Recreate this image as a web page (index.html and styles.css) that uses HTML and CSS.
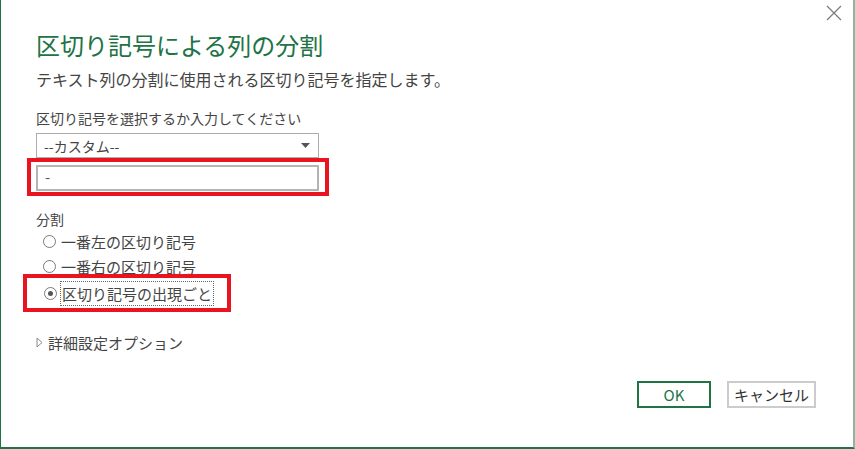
FILE: index.html
```html
<html>
  <head>
    <meta name="viewport" content="width=device-width, initial-scale=1">
    <link rel="stylesheet" href="styles.css">
  </head>
  <body>
    <div class="dialog">
      <div class="titlebar">
        <span class="close">
          <svg width="16" height="16" viewBox="0 0 16 16">
            <path d="M1 1 L15 15 M15 1 L1 15" stroke="#7a7a7a" stroke-width="1.2" fill="none"/>
          </svg>
        </span>
      </div>
      <div class="content">
        <h1 class="title">区切り記号による列の分割</h1>
        <p class="subtitle">テキスト列の分割に使用される区切り記号を指定します。</p>
        <label class="label">区切り記号を選択するか入力してください</label>
        <div class="select">
          <span>--カスタム--</span>
          <svg width="9" height="5" viewBox="0 0 9 5"><path d="M0 0 L9 0 L4.5 5 Z" fill="#555"/></svg>
        </div>
        <div class="mark mark-input">
          <div class="input">-</div>
        </div>
        <label class="label split-label">分割</label>
        <div class="radio"><span class="circle"></span><span>一番左の区切り記号</span></div>
        <div class="radio"><span class="circle"></span><span>一番右の区切り記号</span></div>
        <div class="mark mark-radio">
          <div class="radio checked"><span class="circle"><span class="dot"></span></span><span class="focus">区切り記号の出現ごと</span></div>
        </div>
        <div class="advanced">
          <svg width="7" height="11" viewBox="0 0 7 11"><path d="M1 1 L6 5.5 L1 10 Z" fill="none" stroke="#8a8a8a" stroke-width="1"/></svg>
          <span>詳細設定オプション</span>
        </div>
        <div class="buttons">
          <button class="ok">OK</button>
          <button class="cancel">キャンセル</button>
        </div>
      </div>
    </div>
  </body>
</html>
```
FILE: styles.css
```css
body {
  margin: 0;
  background: white;
  font-family: "Noto Sans CJK JP", "Noto Sans", sans-serif;
  color: #444;
}
.dialog {
  width: 855px;
  height: 449px;
  box-sizing: border-box;
  border-left: 1px solid #217346;
  border-bottom: 2px solid #217346;
  border-right: 2px solid #8cb79c;
  display: flex;
  flex-direction: column;
}
.titlebar {
  height: 26px;
  box-sizing: border-box;
  padding: 5px 11px 0 0;
  display: flex;
  justify-content: flex-end;
}
.close {
  width: 16px;
  height: 16px;
}
.content {
  flex: 1;
  display: flex;
  flex-direction: column;
  align-items: flex-start;
  padding: 0 37px 39px 35px;
}
.title {
  margin: 4px 0 0 0;
  font-size: 24px;
  font-weight: normal;
  line-height: 30px;
  color: #217346;
}
.subtitle {
  margin: 8px 0 0 0;
  font-size: 16px;
  line-height: 22px;
  color: #444;
}
.label {
  margin-top: 18px;
  font-size: 14px;
  line-height: 20px;
  color: #444;
}
.select {
  margin-top: 5px;
  width: 283px;
  height: 25px;
  box-sizing: border-box;
  border: 1px solid #adadad;
  display: flex;
  align-items: center;
  justify-content: space-between;
  padding: 0 8px 0 7px;
  font-size: 14px;
  color: #444;
}
.mark {
  border: 4px solid #e8141f;
  box-sizing: border-box;
}
.mark-input {
  margin-left: -9px;
  width: 302px;
  height: 38px;
  padding: 3px 6px 0 5px;
}
.input {
  width: 283px;
  height: 26px;
  box-sizing: border-box;
  border: 2px solid #b4b4b4;
  padding-left: 7px;
  font-size: 15px;
  line-height: 20px;
  color: #555;
}
.split-label {
  margin-top: 13px;
}
.radio {
  display: flex;
  align-items: center;
  height: 25px;
  margin-left: 7px;
  font-size: 15px;
  color: #444;
}
.circle {
  width: 11px;
  height: 11px;
  border: 1px solid #7a7a7a;
  border-radius: 50%;
  margin-right: 5px;
  display: flex;
  align-items: center;
  justify-content: center;
  flex-shrink: 0;
}
.dot {
  width: 5px;
  height: 5px;
  border-radius: 50%;
  background: #555;
}
.mark-radio {
  margin-left: -13px;
  margin-top: -5px;
  width: 208px;
  height: 38px;
  padding: 0 0 0 10px;
  display: flex;
  align-items: center;
}
.mark-radio .radio {
  margin-left: 7px;
}
.focus {
  border: 1px dotted #666;
  padding: 0 1px;
  line-height: 23px;
  margin-left: -2px;
}
.advanced {
  margin-top: 20px;
  display: flex;
  align-items: center;
  font-size: 15px;
  color: #444;
}
.advanced svg {
  margin-right: 5px;
}
.buttons {
  margin-top: auto;
  align-self: flex-end;
  display: flex;
  gap: 16px;
}
button {
  font-family: "Noto Sans CJK JP", "Noto Sans", sans-serif;
  background: white;
  height: 27px;
  padding: 0;
  font-size: 15px;
  cursor: pointer;
}
.ok {
  width: 74px;
  border: 2px solid #217346;
  color: #217346;
}
.cancel {
  width: 89px;
  border: 2px solid #cccccc;
  color: #333;
}
```
